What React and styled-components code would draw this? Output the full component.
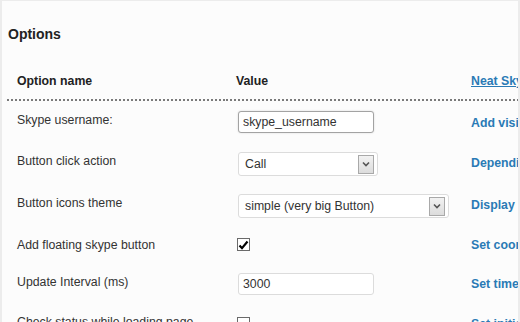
import React from "react";
import styled, { createGlobalStyle } from "styled-components";

const Global = createGlobalStyle`
  html, body { margin: 0; padding: 0; background: #fcfcfc; }
  body { font-family: "Liberation Sans", Arial, sans-serif; }
`;

const Page = styled.div`
  box-sizing: border-box;
  width: 520px;
  height: 322px;
  overflow: hidden;
  background: #fcfcfc;
  border-top: 1px solid #ececec;
  border-left: 2px solid #ececec;
  border-right: 2px solid #ececec;
`;

const Title = styled.h3`
  margin: 25px 0 0 6px;
  font-size: 14px;
  line-height: 17px;
  font-weight: bold;
  color: #222;
`;

const Row = styled.div`
  display: grid;
  grid-template-columns: 219px 235px 320px;
  margin-left: 5px;
  height: ${(p) => p.$h}px;
  white-space: nowrap;
`;

const HeadCell = styled.div`
  padding: 31px 10px 11px 10px;
  font-size: 12.3px;
  line-height: 15px;
  font-weight: bold;
  color: #222;
  background: repeating-linear-gradient(to right, #7a7a7a 0 2px, transparent 2px 4px) left bottom / 100% 2px no-repeat;
`;

const HeadLink = styled(HeadCell)`
  color: #2a7ab5;
  text-decoration: underline;
`;

const Label = styled.div`
  padding: ${(p) => p.$pt}px 10px 0 10px;
  font-size: 12.3px;
  line-height: 15px;
  color: #333;
`;

const ValueCell = styled.div`
  padding: ${(p) => p.$pt}px 0 0 12px;
`;

const Desc = styled.div`
  padding: ${(p) => p.$pt}px 10px 0 10px;
  font-size: 12.3px;
  line-height: 15px;
  font-weight: bold;
  color: #2a7ab5;
`;

const TextInput = styled.input`
  box-sizing: border-box;
  display: block;
  width: 136px;
  height: 22px;
  margin: 0;
  padding: 0 4px;
  border: 1px solid ${(p) => (p.$focus ? "#a3a3a3" : "#dcdcdc")};
  border-radius: 3px;
  background: #fff;
  font-family: "Liberation Sans", Arial, sans-serif;
  font-size: 12.3px;
  color: #333;
  box-shadow: ${(p) => (p.$focus ? "0 0 2px rgba(0,0,0,0.15)" : "none")};
  outline: none;
`;

const SelectBox = styled.div`
  box-sizing: border-box;
  display: flex;
  align-items: center;
  justify-content: space-between;
  width: ${(p) => p.$w}px;
  height: 24px;
  border: 1px solid #dcdcdc;
  border-radius: 3px;
  background: #fff;
  padding: 0 3px 0 6px;
  font-size: 12.3px;
  color: #333;
`;

const ArrowBox = styled.span`
  box-sizing: border-box;
  display: flex;
  align-items: center;
  justify-content: center;
  width: 16px;
  height: 19px;
  border: 1px solid #a9a9a9;
  background: linear-gradient(#f2f2f2, #dcdcdc);
`;

const Check = styled.span`
  box-sizing: border-box;
  display: flex;
  align-items: center;
  justify-content: center;
  width: 13px;
  height: 13px;
  margin-left: -1px;
  border: 1px solid #6a6a6a;
  background: #fff;
`;

const Chevron = () => (
  <svg width="8" height="6" viewBox="0 0 8 6">
    <path d="M1 1.5 L4 4.5 L7 1.5" fill="none" stroke="#555" strokeWidth="1.6" />
  </svg>
);

const Tick = () => (
  <svg width="11" height="10" viewBox="0 0 11 10">
    <path d="M1.5 5.5 L4 8.2 L9.5 1.5" fill="none" stroke="#000" strokeWidth="2.2" />
  </svg>
);

const Select = ({ w, value }) => (
  <SelectBox $w={w}>
    <span>{value}</span>
    <ArrowBox>
      <Chevron />
    </ArrowBox>
  </SelectBox>
);

const rows = [
  { h: 41, lp: 12, vp: 10, dp: 15, label: "Skype username:", control: <TextInput $focus defaultValue="skype_username" />, desc: "Add visible Skype username" },
  { h: 42, lp: 12, vp: 10, dp: 14, label: "Button click action", control: <Select w={140} value="Call" />, desc: "Depending on this option" },
  { h: 42, lp: 12, vp: 10, dp: 14, label: "Button icons theme", control: <Select w={211} value="simple (very big Button)" />, desc: "Display style of button" },
  { h: 37, lp: 12, vp: 12, dp: 12, label: "Add floating skype button", control: <Check><Tick /></Check>, desc: "Set coordinates of button" },
  { h: 40, lp: 12, vp: 10, dp: 14, label: "Update Interval (ms)", control: <TextInput defaultValue="3000" />, desc: "Set timeout for update" },
  { h: 40, lp: 12, vp: 14, dp: 14, label: "Check status while loading page", control: <Check />, desc: "Set initial status" },
];

export default function App() {
  return (
    <>
      <Global />
      <Page>
        <Title>Options</Title>
        <Row $h={58}>
          <HeadCell>Option name</HeadCell>
          <HeadCell>Value</HeadCell>
          <HeadLink>Neat Skype Status</HeadLink>
        </Row>
        {rows.map((r, i) => (
          <Row key={i} $h={r.h}>
            <Label $pt={r.lp}>{r.label}</Label>
            <ValueCell $pt={r.vp}>{r.control}</ValueCell>
            <Desc $pt={r.dp}>{r.desc}</Desc>
          </Row>
        ))}
      </Page>
    </>
  );
}
